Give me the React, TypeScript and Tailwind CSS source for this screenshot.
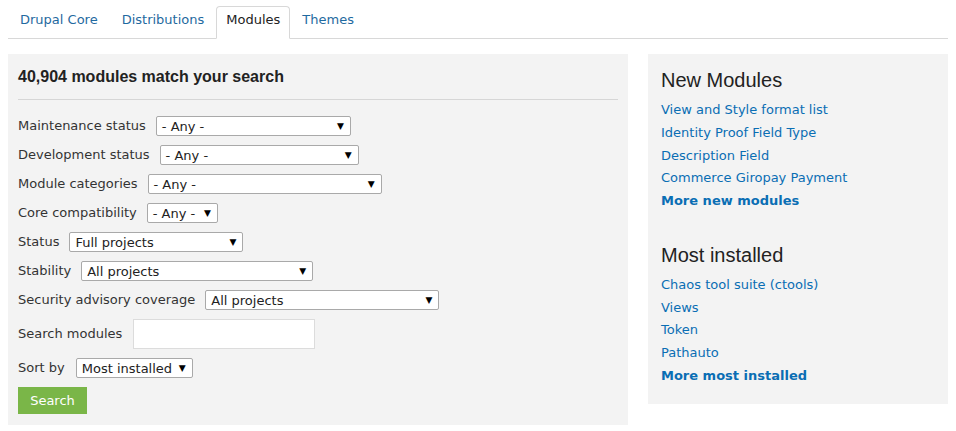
import React from "react";

const tabs = ["Drupal Core", "Distributions", "Modules", "Themes"];

const filters: { label: string; value: string; width: string }[] = [
  { label: "Maintenance status", value: "- Any -", width: "w-[195px]" },
  { label: "Development status", value: "- Any -", width: "w-[199px]" },
  { label: "Module categories", value: "- Any -", width: "w-[234px]" },
  { label: "Core compatibility", value: "- Any -", width: "w-[71px]" },
  { label: "Status", value: "Full projects", width: "w-[174px]" },
  { label: "Stability", value: "All projects", width: "w-[232px]" },
  { label: "Security advisory coverage", value: "All projects", width: "w-[234px]" },
];

const newModules = [
  "View and Style format list",
  "Identity Proof Field Type",
  "Description Field",
  "Commerce Giropay Payment",
];

const mostInstalled = ["Chaos tool suite (ctools)", "Views", "Token", "Pathauto"];

function Select({ value, width }: { value: string; width: string }) {
  return (
    <div
      className={`${width} h-[20px] flex items-center justify-between bg-white border border-[#a9a9a9] rounded-[2px] pl-[5px] pr-[6px] text-[13px] text-[#222]`}
    >
      <span className="leading-none">{value}</span>
      <span className="text-[9px] leading-none text-black">▼</span>
    </div>
  );
}

function Block({ title, items, more }: { title: string; items: string[]; more: string }) {
  return (
    <div>
      <h2 className="font-['Liberation_Sans',Arial,sans-serif] text-[20px] text-[#222] leading-[26px] mb-[6px]">
        {title}
      </h2>
      <ul className="text-[13px] leading-[22.75px] text-[#0a6eb4]">
        {items.map((i) => (
          <li key={i}>{i}</li>
        ))}
        <li className="font-bold">{more}</li>
      </ul>
    </div>
  );
}

export default function App() {
  return (
    <div className="w-[956px] h-[431px] bg-white px-2 font-['DejaVu_Sans',Verdana,sans-serif] text-[#333]">
      <div className="flex pt-[6px] border-b border-[#d8d8d8] h-[39px]">
        {tabs.map((t) =>
          t === "Modules" ? (
            <div
              key={t}
              className="h-[33px] px-[9px] pb-[5px] flex items-center text-[13px] text-[#222] bg-white border border-[#d8d8d8] border-b-white rounded-t-[4px] mb-[-1px]"
            >
              {t}
            </div>
          ) : (
            <div key={t} className="h-[33px] px-3 flex items-center text-[13px] text-[#1f6aa0] pb-[6px]">
              {t}
            </div>
          )
        )}
      </div>

      <div className="flex gap-5 mt-[15px]">
        <div className="w-[620px] h-[371px] bg-[#f3f3f3] px-[10px]">
          <h1 className="font-['Liberation_Sans',Arial,sans-serif] font-bold text-[16px] leading-[24px] text-[#222] pt-[11px] pb-[10px] border-b border-[#d6d6d6]">
            40,904 modules match your search
          </h1>
          <div className="flex flex-col gap-[9px] mt-[16px]">
            {filters.map((f) => (
              <div key={f.label} className="flex items-center gap-[10px] text-[13px] h-[20px]">
                <span>{f.label}</span>
                <Select value={f.value} width={f.width} />
              </div>
            ))}
          </div>
          <div className="flex items-center gap-[11px] text-[13px] mt-[9px]">
            <span>Search modules</span>
            <div className="w-[182px] h-[30px] bg-white border border-[#dcdcdc]" />
          </div>
          <div className="flex items-center gap-[11px] text-[13px] mt-[9px]">
            <span>Sort by</span>
            <Select value="Most installed" width="w-[117px]" />
          </div>
          <button className="mt-[9px] w-[69px] h-[27px] bg-[#7ab648] text-white text-[13px]">Search</button>
        </div>

        <div className="w-[300px] h-[350px] bg-[#f3f3f3] px-[13px] pt-[13px] self-start flex flex-col gap-[29px]">
          <Block title="New Modules" items={newModules} more="More new modules" />
          <Block title="Most installed" items={mostInstalled} more="More most installed" />
        </div>
      </div>
    </div>
  );
}
